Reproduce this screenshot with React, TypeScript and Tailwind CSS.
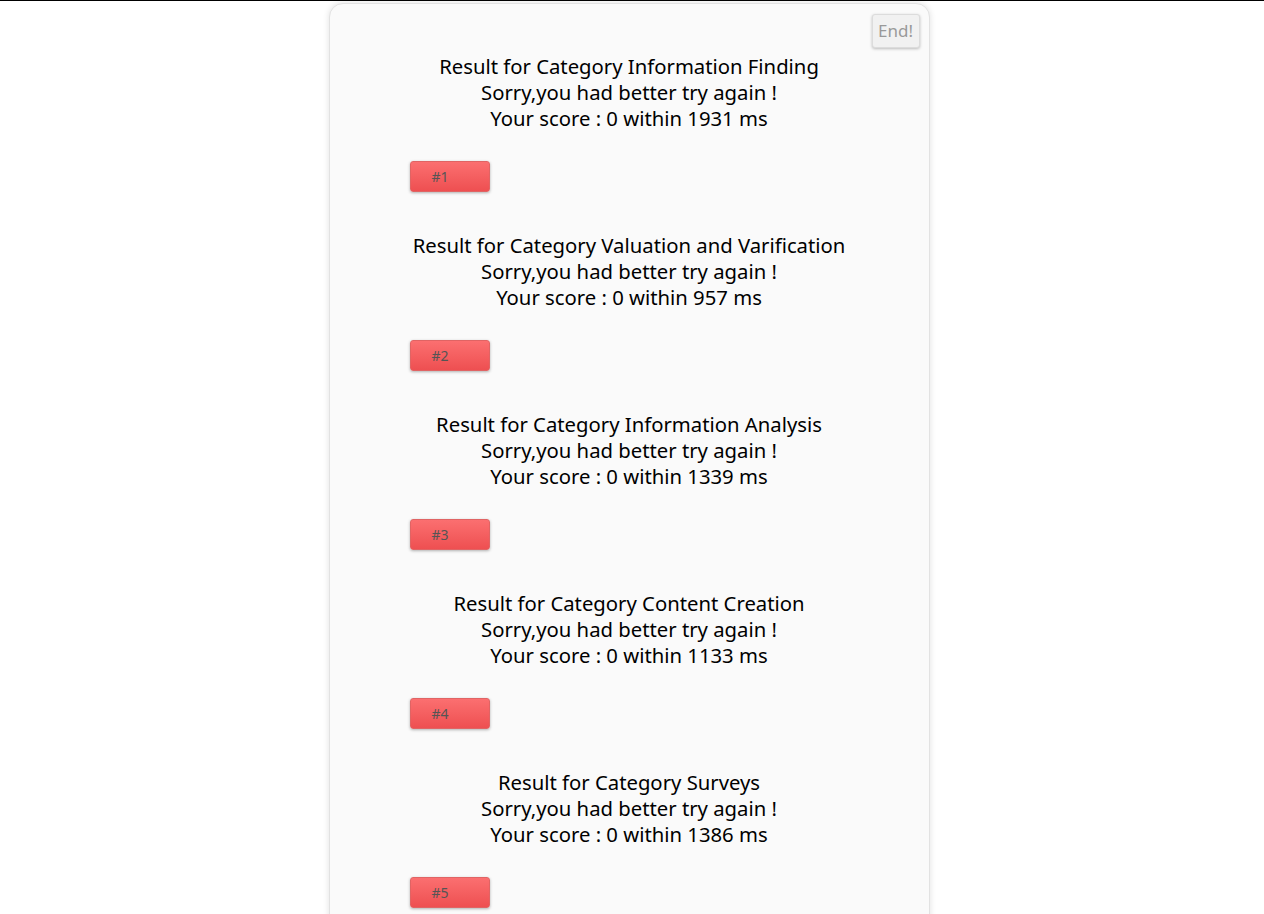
import React from 'react';

interface CategoryResult {
  name: string;
  score: number;
  ms: number;
}

const results: CategoryResult[] = [
  { name: 'Information Finding', score: 0, ms: 1931 },
  { name: 'Valuation and Varification', score: 0, ms: 957 },
  { name: 'Information Analysis', score: 0, ms: 1339 },
  { name: 'Content Creation', score: 0, ms: 1133 },
  { name: 'Surveys', score: 0, ms: 1386 },
];

const ResultBlock: React.FC<{ r: CategoryResult; index: number }> = ({ r, index }) => (
  <div className="flex flex-col">
    {/* message lines */}
    <div className="text-center text-[20.3px] leading-[26px] text-black">
      <p>Result for Category {r.name}</p>
      <p>Sorry,you had better try again !</p>
      <p>Your score : {r.score} within {r.ms} ms</p>
    </div>
    <div className="pl-[80px] pt-[30px] pb-[40px]">
      <button className="h-[31px] w-[80px] rounded-[3px] border border-[#e06464] bg-gradient-to-b from-[#fb6f70] to-[#ee4f51] pl-[21px] text-left text-[14px] text-[#555] shadow-[0_1px_3px_rgba(0,0,0,0.3)]">
        #{index + 1}
      </button>
    </div>
  </div>
);

export default function App() {
  return (
    <div className="min-h-[914px] overflow-hidden border-t border-black bg-white font-['Noto_Sans','Open_Sans',sans-serif]">
      <div className="flex w-[1258px] justify-center pt-[2px]">
        {/* card */}
        <div className="relative w-[601px] rounded-t-[14px] border border-[#e2e2e2] bg-[#fafafa] pt-[49px] shadow-[0_0_6px_rgba(0,0,0,0.12)]">
          <button className="absolute right-[9px] top-[10px] h-[34px] w-[48px] rounded-[3px] border border-[#dcdcdc] bg-[#f1f1f1] text-[17px] text-[#999] shadow-[0_1px_3px_rgba(0,0,0,0.25)]">
            End!
          </button>
          {results.map((r, i) => (
            <ResultBlock key={r.name} r={r} index={i} />
          ))}
        </div>
      </div>
    </div>
  );
}
